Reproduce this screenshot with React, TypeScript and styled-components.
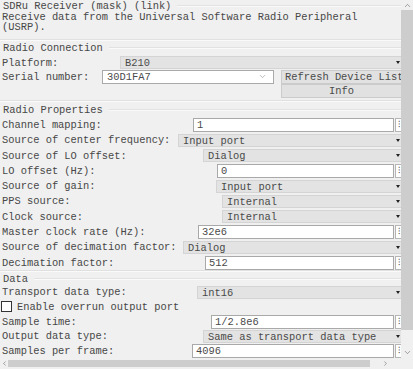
import React from 'react';
import styled, { createGlobalStyle } from 'styled-components';
import { ChevronDown, ChevronUp, ChevronLeft, ChevronRight } from 'lucide-react';

const GlobalStyle = createGlobalStyle`
  html, body { margin: 0; padding: 0; background: #f0f0f0; }
  body {
    font-family: "Liberation Mono", "DejaVu Sans Mono", monospace;
    font-size: 10.4px;
    color: #474747;
  }
`;

type Field =
  | { kind: 'drop'; label: string; at: number; value: string }
  | { kind: 'edit'; label: string; at: number; value: string };

const properties: Field[] = [
  { kind: 'edit', label: 'Channel mapping:', at: 193, value: '1' },
  { kind: 'drop', label: 'Source of center frequency:', at: 178, value: 'Input port' },
  { kind: 'drop', label: 'Source of LO offset:', at: 203, value: 'Dialog' },
  { kind: 'edit', label: 'LO offset (Hz):', at: 217, value: '0' },
  { kind: 'drop', label: 'Source of gain:', at: 216, value: 'Input port' },
  { kind: 'drop', label: 'PPS source:', at: 222, value: 'Internal' },
  { kind: 'drop', label: 'Clock source:', at: 222, value: 'Internal' },
  { kind: 'edit', label: 'Master clock rate (Hz):', at: 198, value: '32e6' },
  { kind: 'drop', label: 'Source of decimation factor:', at: 183, value: 'Dialog' },
  { kind: 'edit', label: 'Decimation factor:', at: 205, value: '512' },
];

export default function App() {
  const renderField = (f: Field, h: number) => (
    <Row key={f.label} $h={h}>
      <Label $w={f.at - 2}>{f.label}</Label>
      {f.kind === 'drop' ? (
        <Dropdown>{f.value}</Dropdown>
      ) : (
        <>
          <Edit>{f.value}</Edit>
          <MoreButton>⁝</MoreButton>
        </>
      )}
    </Row>
  );

  return (
    <>
      <GlobalStyle />
      <Frame>
        <Content>
          <TitleRow>
            <span>SDRu Receiver (mask) (link)</span>
            <Rule />
          </TitleRow>
          <Desc>
            <div>Receive data from the Universal Software Radio Peripheral</div>
            <div>(USRP).</div>
          </Desc>
          <Divider />

          <Heading $h={15}>
            <span>Radio Connection</span>
            <Rule />
          </Heading>
          <Row $h={14}>
            <Label $w={118}>Platform:</Label>
            <Dropdown>B210</Dropdown>
          </Row>
          <Row $h={14}>
            <Label $w={100}>Serial number:</Label>
            <Combo>
              <span>30D1FA7</span>
              <ChevronDown size={9} strokeWidth={1.3} color="#777" />
            </Combo>
            <Button $align="left">Refresh Device List</Button>
          </Row>
          <Row $h={15}>
            <Label $w={279} />
            <Button $align="center">Info</Button>
          </Row>
          <Spacer $h={1} />
          <Divider />

          <Heading $h={16}>
            <span>Radio Properties</span>
            <Rule />
          </Heading>
          {properties.map((f) => renderField(f, 15.3))}
          <Divider />

          <Heading $h={13}>
            <span>Data</span>
            <Rule />
          </Heading>
          {renderField({ kind: 'drop', label: 'Transport data type:', at: 197, value: 'int16' }, 14.6)}
          <Row $h={14.6}>
            <CheckBox />
            <span>Enable overrun output port</span>
          </Row>
          {renderField({ kind: 'edit', label: 'Sample time:', at: 211, value: '1/2.8e6' }, 14.6)}
          {renderField({ kind: 'drop', label: 'Output data type:', at: 203, value: 'Same as transport data type' }, 14.6)}
          {renderField({ kind: 'edit', label: 'Samples per frame:', at: 192, value: '4096' }, 14.6)}
        </Content>

        <VScroll>
          <ArrowCell $h={10}>
            <ChevronUp size={9} strokeWidth={1.4} color="#555" />
          </ArrowCell>
          <VThumb />
          <ArrowCell $h={28} $end>
            <ChevronDown size={9} strokeWidth={1.4} color="#555" />
          </ArrowCell>
        </VScroll>

        <HScroll>
          <HArrow $w={8}>
            <ChevronLeft size={7} strokeWidth={1.6} color="#444" />
          </HArrow>
          <HThumb />
          <HArrow $w={31}>
            <ChevronRight size={7} strokeWidth={1.6} color="#444" />
          </HArrow>
        </HScroll>
        <Corner />
      </Frame>
    </>
  );
}

const Frame = styled.div`
  width: 413px;
  height: 369px;
  display: grid;
  grid-template-columns: 401px 12px;
  grid-template-rows: 358px 11px;
  overflow: hidden;
  background: #f0f0f0;
`;

const Content = styled.div`
  display: flex;
  flex-direction: column;
  padding: 0 0 0 2px;
  overflow: hidden;
  white-space: nowrap;
`;

const TitleRow = styled.div`
  display: flex;
  align-items: center;
  gap: 6px;
  height: 12px;
  padding-left: 1px;
`;

const Rule = styled.div`
  flex: 1;
  height: 1px;
  background: #e2e2e2;
  border-bottom: 1px solid #fafafa;
`;

const Desc = styled.div`
  display: flex;
  flex-direction: column;
  padding-bottom: 7px;

  & > div {
    height: 10px;
    line-height: 11px;
  }
`;

const Divider = styled.div`
  height: 1px;
  margin-left: -2px;
  background: #e0e0e0;
  border-bottom: 1px solid #fafafa;
`;

const Heading = styled.div<{ $h: number }>`
  display: flex;
  align-items: center;
  gap: 6px;
  height: ${(p) => p.$h}px;
  padding-left: 1px;
`;

const Spacer = styled.div<{ $h: number }>`
  height: ${(p) => p.$h}px;
`;

const Row = styled.div<{ $h: number }>`
  display: flex;
  align-items: center;
  height: ${(p) => p.$h}px;
  flex-shrink: 0;
`;

const Label = styled.div<{ $w: number }>`
  width: ${(p) => p.$w}px;
  flex-shrink: 0;
`;

const Dropdown = styled.div`
  position: relative;
  flex: 1;
  height: 13px;
  line-height: 12px;
  box-sizing: border-box;
  padding-left: 4px;
  margin-right: -1px;
  background: #e3e3e3;
  border: 1px solid #d4d4d4;
  color: #4a4a4a;

  &::after {
    content: '';
    position: absolute;
    right: 1px;
    top: 4px;
    border-top: 3px solid #222;
    border-left: 2px solid transparent;
    border-right: 2px solid transparent;
  }
`;

const Edit = styled.div`
  flex: 1;
  height: 14px;
  line-height: 12px;
  box-sizing: border-box;
  padding-left: 3px;
  background: #fff;
  border: 1px solid #a9a9a9;
  color: #4a4a4a;
`;

const MoreButton = styled.div`
  width: 6px;
  height: 14px;
  margin-left: 1px;
  box-sizing: border-box;
  border: 1px solid #b5b5b5;
  border-right: none;
  background: #fff;
  font-size: 9px;
  line-height: 12px;
  text-align: center;
  color: #555;
  overflow: hidden;
`;

const Combo = styled.div`
  display: flex;
  align-items: center;
  justify-content: space-between;
  width: 172px;
  height: 14px;
  box-sizing: border-box;
  padding: 0 6px 0 4px;
  background: #fff;
  border: 1px solid #a9a9a9;
  color: #4a4a4a;
`;

const Button = styled.div<{ $align: 'left' | 'center' }>`
  flex: 1;
  height: 14px;
  line-height: 12px;
  box-sizing: border-box;
  margin-left: ${(p) => (p.$align === 'left' ? '7px' : '0')};
  padding-left: ${(p) => (p.$align === 'left' ? '3px' : '0')};
  text-align: ${(p) => p.$align};
  background: #e1e1e1;
  border: 1px solid #cbcbcb;
  border-right: none;
  overflow: hidden;
  color: #4a4a4a;
`;

const CheckBox = styled.div`
  width: 11px;
  height: 11px;
  box-sizing: border-box;
  margin: 0 5px 0 -1px;
  background: #fff;
  border: 1px solid #333;
`;

const VScroll = styled.div`
  display: flex;
  flex-direction: column;
  background: #f0f0f0;
`;

const ArrowCell = styled.div<{ $h: number; $end?: boolean }>`
  height: ${(p) => p.$h}px;
  display: flex;
  justify-content: center;
  align-items: ${(p) => (p.$end ? 'flex-end' : 'center')};
  padding-bottom: ${(p) => (p.$end ? '1px' : '0')};
  box-sizing: border-box;
`;

const VThumb = styled.div`
  flex: 1;
  background: #cdcdcd;
`;

const HScroll = styled.div`
  display: flex;
  align-items: center;
  background: #f0f0f0;
`;

const HArrow = styled.div<{ $w: number }>`
  width: ${(p) => p.$w}px;
  height: 100%;
  display: flex;
  align-items: center;
  justify-content: center;
`;

const HThumb = styled.div`
  width: 362px;
  height: 7px;
  background: #cdcdcd;
`;

const Corner = styled.div`
  background: #f0f0f0;
`;
